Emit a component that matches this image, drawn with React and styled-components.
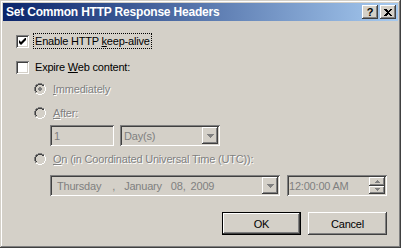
import React from 'react';
import styled, { createGlobalStyle, css } from 'styled-components';

const GlobalStyle = createGlobalStyle`
  html, body { margin: 0; padding: 0; background: #d4d0c8; }
  body { font-family: "Liberation Sans", Arial, sans-serif; font-size: 11px; letter-spacing: -0.2px; }
`;

const raised = css`
  box-shadow: inset -1px -1px #404040, inset 1px 1px #ffffff, inset -2px -2px #808080, inset 2px 2px #d4d0c8;
`;

const sunken = css`
  box-shadow: inset 1px 1px #808080, inset -1px -1px #ffffff, inset 2px 2px #404040, inset -2px -2px #d4d0c8;
`;

const Window = styled.div`
  box-sizing: border-box;
  width: 401px;
  height: 248px;
  padding: 3px;
  background: #d4d0c8;
  box-shadow: inset -1px -1px #404040, inset 1px 1px #d4d0c8, inset -2px -2px #808080, inset 2px 2px #ffffff;
  display: flex;
  flex-direction: column;
`;

const TitleBar = styled.div`
  height: 18px;
  display: flex;
  align-items: center;
  padding: 0 2px 0 2px;
  background: linear-gradient(to right, #0a246a, #a6caf0);
`;

const Title = styled.div`
  flex: 1;
  color: #fff;
  font-weight: bold;
  font-size: 12px;
  letter-spacing: -0.2px;
  padding-left: 1px;
`;

const CaptionButton = styled.div`
  box-sizing: border-box;
  width: 16px;
  height: 14px;
  background: #d4d0c8;
  ${raised};
  display: flex;
  align-items: center;
  justify-content: center;
  margin-left: ${p => p.$gap || 0}px;
  font-weight: bold;
  font-size: 11px;
  color: #000;
  line-height: 1;
`;

const Body = styled.div`
  flex: 1;
  display: flex;
  flex-direction: column;
  padding: 12px 0 0 13px;
`;

const Row = styled.div`
  display: flex;
  align-items: center;
  height: 16px;
  margin-left: ${p => p.$indent || 0}px;
  margin-top: ${p => p.$top || 0}px;
  gap: ${p => p.$gap || 5}px;
`;

const Box = styled.div`
  box-sizing: border-box;
  width: 13px;
  height: 13px;
  background: #fff;
  ${sunken};
  display: flex;
  align-items: center;
  justify-content: center;
`;

const Label = styled.span`
  color: ${p => (p.$disabled ? '#808080' : '#000')};
  text-shadow: ${p => (p.$disabled ? '1px 1px 0 #ffffff' : 'none')};
  padding: 1px 1px;
  outline: ${p => (p.$focus ? '1px dotted #000' : 'none')};
  white-space: nowrap;
  u { text-decoration: underline; }
`;

const FieldRow = styled.div`
  display: flex;
  margin-left: ${p => p.$indent || 0}px;
  margin-top: ${p => p.$top || 0}px;
  gap: ${p => p.$gap || 6}px;
`;

const Field = styled.div`
  box-sizing: border-box;
  width: ${p => p.$w}px;
  height: 21px;
  background: #d4d0c8;
  ${sunken};
  display: flex;
  align-items: center;
  padding: 0 2px 0 ${p => p.$pad || 4}px;
  color: #808080;
  white-space: pre;
`;

const FieldText = styled.span`
  flex: 1;
  display: flex;
`;

const Part = styled.span`
  margin-left: ${p => p.$gap || 0}px;
`;

const DropButton = styled.div`
  box-sizing: border-box;
  width: 16px;
  height: 17px;
  background: #d4d0c8;
  ${raised};
  display: flex;
  align-items: center;
  justify-content: center;
`;

const Spin = styled.div`
  display: flex;
  flex-direction: column;
  width: 16px;
  height: 17px;
`;

const SpinHalf = styled.div`
  box-sizing: border-box;
  flex: 1;
  background: #d4d0c8;
  ${raised};
  display: flex;
  align-items: center;
  justify-content: center;
`;

const Footer = styled.div`
  display: flex;
  justify-content: flex-end;
  gap: 7px;
  margin-top: 16px;
  padding-right: 11px;
`;

const Button = styled.div`
  box-sizing: border-box;
  width: 79px;
  height: 23px;
  background: #d4d0c8;
  display: flex;
  align-items: center;
  justify-content: center;
  color: #000;
  ${p =>
    p.$default
      ? css`
          box-shadow: inset 0 0 0 1px #000, inset -2px -2px #404040, inset 2px 2px #ffffff, inset -3px -3px #808080;
        `
      : raised};
`;

const Check = () => (
  <svg width="7" height="7" viewBox="0 0 7 7">
    <path d="M0 2v3l2 2 5-5V-1L2 4z" fill="#000" />
  </svg>
);

const Radio = ({ checked }) => (
  <svg width="12" height="12" viewBox="0 0 12 12" shapeRendering="crispEdges">
    <path d="M4 0h4v1H4zM2 1h2v1H2zM8 1h2v1H8zM1 2h1v2H1zM0 4h1v4H0zM1 8h1v2H1z" fill="#808080" />
    <path d="M4 1h4v1H4zM2 2h2v1H2zM8 2h2v1H8zM2 3h1v1H2zM1 4h1v4H1zM2 8h1v1H2z" fill="#404040" />
    <path d="M10 2h1v2h-1zM11 4h1v4h-1zM10 8h1v2h-1zM8 10h2v1H8zM4 11h4v1H4zM2 10h2v1H2z" fill="#ffffff" />
    {checked && <path d="M5 4h2v1H5zM4 5h4v2H4zM5 7h2v1H5z" fill="#808080" />}
  </svg>
);

const Arrow = () => (
  <svg width="7" height="4" viewBox="0 0 7 4" shapeRendering="crispEdges">
    <path d="M0 0h7v1H0zM1 1h5v1H1zM2 2h3v1H2zM3 3h1v1H3z" fill="#808080" />
  </svg>
);

const SmallArrow = ({ up }) => (
  <svg width="5" height="3" viewBox="0 0 5 3" shapeRendering="crispEdges">
    {up ? (
      <path d="M2 0h1v1H2zM1 1h3v1H1zM0 2h5v1H0z" fill="#808080" />
    ) : (
      <path d="M0 0h5v1H0zM1 1h3v1H1zM2 2h1v1H2z" fill="#808080" />
    )}
  </svg>
);

const CloseGlyph = () => (
  <svg width="8" height="7" viewBox="0 0 8 7" shapeRendering="crispEdges">
    <path d="M0 0h2l2 2 2-2h2L5 3.5 8 7H6L4 5 2 7H0l3-3.5z" fill="#000" />
  </svg>
);

export default function App() {
  return (
    <>
      <GlobalStyle />
      <Window>
        <TitleBar>
          <Title>Set Common HTTP Response Headers</Title>
          <CaptionButton>?</CaptionButton>
          <CaptionButton $gap={2}>
            <CloseGlyph />
          </CaptionButton>
        </TitleBar>
        <Body>
          <Row>
            <Box>
              <Check />
            </Box>
            <Label $focus>
              Enable HTTP <u>k</u>eep-alive
            </Label>
          </Row>
          <Row $top={10}>
            <Box />
            <Label>
              Expire <u>W</u>eb content:
            </Label>
          </Row>
          <Row $indent={18} $top={6} $gap={6}>
            <Radio checked />
            <Label $disabled>
              <u>I</u>mmediately
            </Label>
          </Row>
          <Row $indent={18} $top={8} $gap={6}>
            <Radio />
            <Label $disabled>
              <u>A</u>fter:
            </Label>
          </Row>
          <FieldRow $indent={34} $top={4}>
            <Field $w={64}>1</Field>
            <Field $w={100}>
              <FieldText>Day(s)</FieldText>
              <DropButton>
                <Arrow />
              </DropButton>
            </Field>
          </FieldRow>
          <Row $indent={18} $top={5} $gap={6}>
            <Radio />
            <Label $disabled>
              <u>O</u>n (in Coordinated Universal Time (UTC)):
            </Label>
          </Row>
          <FieldRow $indent={34} $top={8} $gap={7}>
            <Field $w={230} $pad={7}>
              <FieldText>
                <Part>Thursday</Part>
                <Part $gap={11}>,</Part>
                <Part $gap={9}>January</Part>
                <Part $gap={9}>08,</Part>
                <Part $gap={5}>2009</Part>
              </FieldText>
              <DropButton>
                <Arrow />
              </DropButton>
            </Field>
            <Field $w={100} $pad={2}>
              <FieldText>12:00:00 AM</FieldText>
              <Spin>
                <SpinHalf>
                  <SmallArrow up />
                </SpinHalf>
                <SpinHalf>
                  <SmallArrow />
                </SpinHalf>
              </Spin>
            </Field>
          </FieldRow>
          <Footer>
            <Button $default>OK</Button>
            <Button>Cancel</Button>
          </Footer>
        </Body>
      </Window>
    </>
  );
}
